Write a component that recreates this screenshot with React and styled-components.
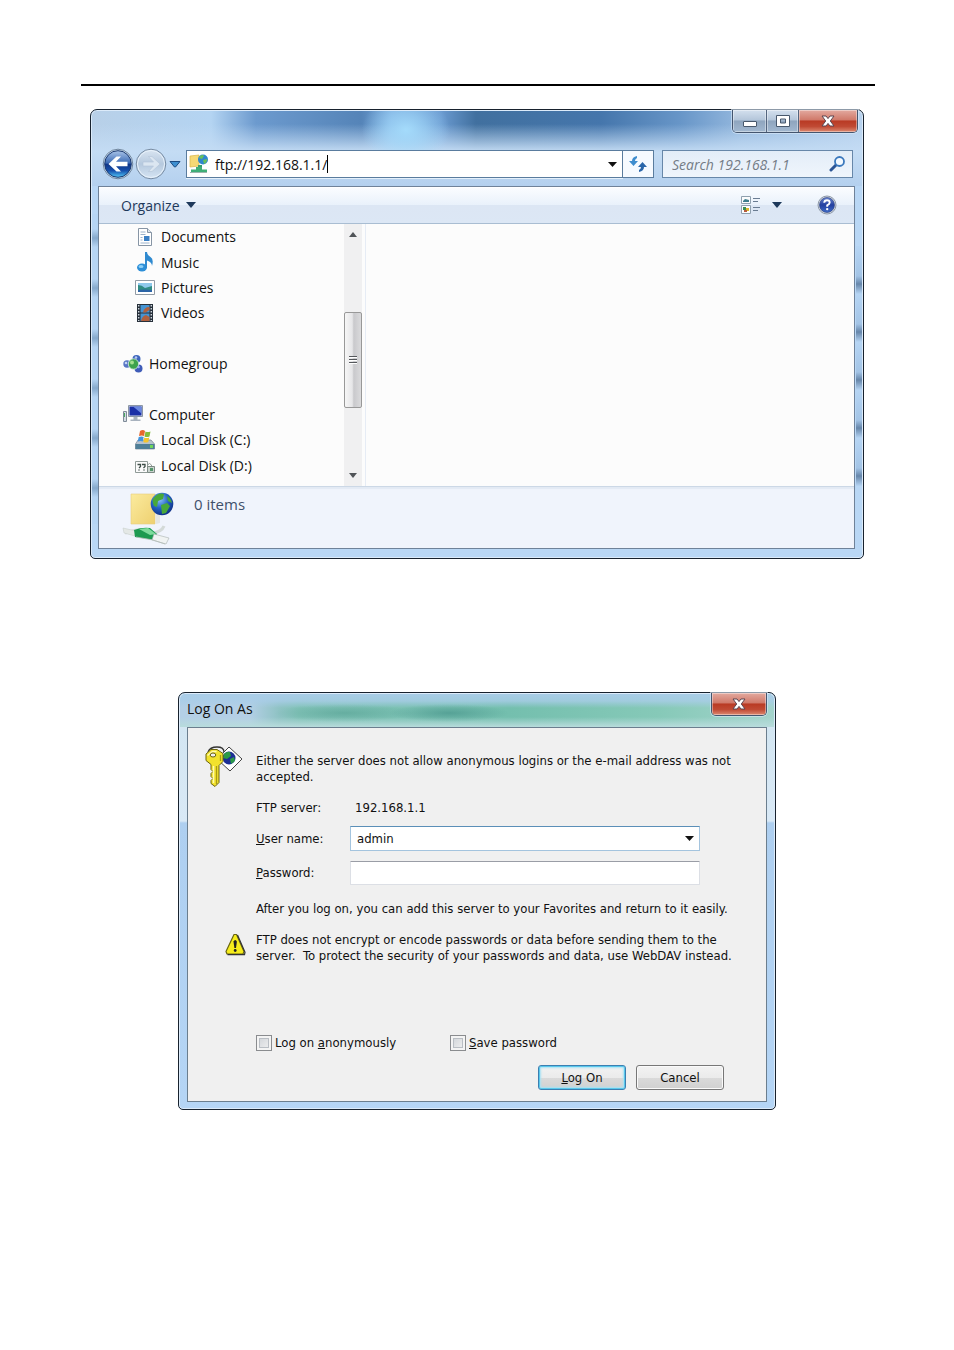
import React from "react";
import styled, { createGlobalStyle, css } from "styled-components";

const Global = createGlobalStyle`
  *, *::before, *::after { box-sizing: border-box; }
  body { margin: 0; background: #fff; }
  button, input, select { font: inherit; color: inherit; margin: 0; padding: 0; border: 0; background: none; outline: none; }
  svg { display: block; flex: none; }
`;

const segoe = css`font-family: "Open Sans", "Noto Sans", sans-serif;`;
const tahoma = css`font-family: "DejaVu Sans Condensed", "DejaVu Sans", sans-serif;`;

const Page = styled.main`
  padding: 84px 79px 240px 81px;
`;
const Rule = styled.hr`
  margin: 0;
  border: 0;
  border-top: 2px solid #000;
`;

/* ---------- Explorer window ---------- */
const Explorer = styled.section`
  ${segoe}
  margin: 23px 11px 0 9px;
  padding: 0 8px 9px 7px;
  border: 1px solid #18222e;
  border-radius: 7px 7px 5px 5px;
  box-shadow: inset 0 0 0 1px #dcebfa;
  font-size: 14px;
  color: #111;
  background:
    radial-gradient(ellipse 44px 36px at 315px 20px, #a4dbfb 0, #a4dbfb99 45%, #a4dbfb00 100%) no-repeat,
    linear-gradient(to bottom, #c4dcf400 14px, #c4dcf4 42px, #b4d0ee 76px) no-repeat 0 0 / 100% 76px,
    linear-gradient(to right, #b8d0e8 0, #b4d4f2 120px, #6c9ace 165px, #5584b8 270px, #78a8dc 300px, #6a9ad0 350px, #41709f 385px, #4576ac 510px, #6896c8 590px, #94b8de 650px, #b8d2ee 100%) no-repeat 0 0 / 100% 76px,
    repeating-linear-gradient(to bottom, #b6d5f4 0, #b6d5f4 15px, #86a9cc 24px, #b6d5f4 33px, #b6d5f4 50px) no-repeat 0 104px / 7px 310px,
    repeating-linear-gradient(to bottom, #b6d5f4 0, #a3c4e6 30px, #6686aa 38px, #b6d5f4 48px) no-repeat 100% 136px / 7px 240px,
    #b9d7f5;
`;
const TitleBar = styled.header`
  display: flex;
  justify-content: flex-end;
  height: 40px;
`;
const CaptionGroup = styled.div`
  display: flex;
  height: 23px;
  margin-right: ${(p) => (p.$overhang ? "-3px" : "0")};
  border: 1px solid #44556e;
  border-top: 0;
  border-radius: 0 0 5px 5px;
  overflow: hidden;
  box-shadow: 0 0 0 1px #dcebfa99;
`;
const CaptionButton = styled.button`
  display: grid;
  place-items: center;
  width: ${(p) => p.$width}px;
  height: 22px;
  border-right: ${(p) => (p.$close ? "0" : "1px solid #54657e")};
  box-shadow: inset 0 0 0 1px #ffffff66;
  background: ${(p) =>
    p.$close
      ? "linear-gradient(#e3aaa0 0, #d0796a 45%, #b93a24 50%, #c04a34 75%, #dc8a72 100%)"
      : "linear-gradient(#d4e0ee 0, #b4c6da 45%, #8fa5be 50%, #a2b8d0 100%)"};
`;
const NavBar = styled.nav`
  display: flex;
  align-items: center;
  height: 28px;
  padding: 0 2px 0 4px;
`;
const RoundButtons = styled.div`
  display: flex;
  align-items: center;
  width: 84px;
`;
const RoundButton = styled.button`
  width: 33px;
  height: 32px;
`;
const ArrowButton = styled.button`
  display: grid;
  place-items: center;
  width: ${(p) => p.$width || 14}px;
  height: 24px;
`;
const AddressBox = styled.div`
  display: flex;
  align-items: center;
  flex: 1;
  height: 28px;
  padding-left: 2px;
  border: 1px solid #5a7c9e;
  background: #fff;
  box-shadow: 0 1px 0 #e4f0fb;
`;
const AddressInput = styled.input`
  field-sizing: content;
  height: 22px;
  margin-left: 6px;
`;
const Caret = styled.span`
  width: 1px;
  height: 18px;
  margin-right: auto;
  background: #000;
`;
const RefreshButton = styled.button`
  display: grid;
  place-items: center;
  width: 31px;
  height: 28px;
  margin-right: 8px;
  border: 1px solid #5a7c9e;
  border-left: 0;
  background: #f6faff;
`;
const SearchBox = styled.label`
  display: flex;
  align-items: center;
  width: 191px;
  height: 28px;
  padding: 0 6px 0 9px;
  border: 1px solid #6787a9;
  background: linear-gradient(#e3edf8, #eff5fc);
`;
const SearchInput = styled.input`
  flex: 1;
  min-width: 0;
  height: 22px;
  font-style: italic;
  &::placeholder { color: #747c86; opacity: 1; }
`;
const Client = styled.div`
  margin-top: 8px;
  border: 1px solid #6f8299;
  background: #fcfcfc;
`;
const Toolbar = styled.div`
  display: flex;
  align-items: center;
  height: 37px;
  padding: 0 17px 0 22px;
  border-bottom: 1px solid #a9bdd2;
  box-shadow: inset 0 1px 0 #fff;
  background: linear-gradient(#fbfdff 0, #e9f1fb 50%, #dce6f4 51%, #dce7f5 100%);
  color: #1e395b;
`;
const OrganizeButton = styled.button`
  display: flex;
  align-items: center;
  gap: 6px;
  margin-right: auto;
`;
const IconButton = styled.button`
  display: block;
  margin-left: ${(p) => p.$gap || 0}px;
`;
const Panes = styled.div`
  display: flex;
  height: 262px;
`;
const Tree = styled.ul`
  display: grid;
  grid-template-rows: repeat(10, 1fr);
  flex: 1;
  margin: 0;
  padding: 0 0 8px;
  list-style: none;
`;
const TreeItem = styled.li`
  display: flex;
  align-items: center;
  grid-row: ${(p) => p.$row};
  padding-left: ${(p) => (p.$root ? 24 : 36)}px;
`;
const TreeLink = styled.a`
  display: flex;
  align-items: center;
  gap: 6px;
  color: #111;
  text-decoration: none;
`;
const Sidebar = styled.div`
  display: flex;
  width: 267px;
  border-right: 1px solid #e6ecf5;
`;
const ScrollTrack = styled.div`
  display: flex;
  flex-direction: column;
  align-items: center;
  width: 18px;
  margin-right: 3px;
  padding: 8px 0;
  background: #f0f0f1;
`;
const ScrollThumb = styled.div`
  display: grid;
  place-items: center;
  width: 18px;
  height: 96px;
  margin: 75px 0 auto;
  border: 1px solid #989898;
  border-radius: 2px;
  background: linear-gradient(to right, #f6f6f6 0, #e6e6e8 45%, #c9c9cc 55%, #dadadc 100%);
`;
const FilePane = styled.div`
  flex: 1;
`;
const Details = styled.footer`
  display: flex;
  height: 62px;
  padding: 4px 0 0 23px;
  gap: 20px;
  border-top: 1px solid #ccd8e6;
  box-shadow: inset 0 2px 1px #e3eaf4;
  background: #f0f4fc;
  font-size: 15px;
  line-height: 26px;
  color: #40506a;
`;

/* ---------- Log On dialog ---------- */
const Dialog = styled.section`
  ${tahoma}
  margin: 133px 99px 0 97px;
  padding: 0 8px 7px;
  border: 1px solid #18222e;
  border-radius: 7px 7px 5px 5px;
  box-shadow: inset 0 0 0 1px #dcebfa;
  font-size: 13px;
  line-height: 16px;
  color: #111;
  background:
    radial-gradient(ellipse 70px 9px at 165px 20px, #3f8f8066, #3f8f8000) no-repeat,
    radial-gradient(ellipse 60px 9px at 270px 20px, #2f7f7877, #2f7f7800) no-repeat,
    linear-gradient(to bottom, #a9cde8 0, #a9cde8cc 8px, #a9cde800 15px, #a9cde800 24px, #b8dcdc 34px) no-repeat 0 0 / 100% 34px,
    linear-gradient(to right, #b4cfe6 0, #b4cfe6 70px, #8fc3c4 100px, #82c3b8 120px, #74bfae 330px, #86c9b8 480px, #a4d4cc 100%) no-repeat 0 0 / 100% 34px,
    linear-gradient(to bottom, #d3e6f2 0, #d9e9f6 94px, #aecff0 96px, #b6d6f6 100%) no-repeat 0 34px / 100% 100%,
    #b9d9f8;
`;
const DialogTitle = styled.header`
  ${segoe}
  display: flex;
  justify-content: space-between;
  height: 34px;
  font-size: 14px;
  line-height: 32px;
`;
const DialogHeading = styled.h1`
  margin: 0;
  font-size: inherit;
  font-weight: 400;
`;
const DialogBody = styled.form`
  padding: 18px 28px 11px 17px;
  border: 1px solid #6b7e8e;
  background: #f0f0f0;
`;
const Message = styled.div`
  display: grid;
  grid-template-columns: 51px 1fr;
`;
const MessageText = styled.p`
  margin: 0;
  padding-top: ${(p) => p.$top || 0}px;
  white-space: pre-line;
`;
const WarningSlot = styled.div`
  padding: 1px 0 0 20px;
`;
const Fields = styled.div`
  display: grid;
  grid-template-columns: 94px minmax(0, 350px);
  align-items: center;
  row-gap: 10px;
  margin: 11px 0 16px 51px;
`;
const Output = styled.output`
  padding-left: 5px;
`;
const SelectWrap = styled.div`
  display: grid;
  align-items: center;
  & > * { grid-area: 1 / 1; }
  & > svg { justify-self: end; margin-right: 6px; pointer-events: none; }
`;
const UserSelect = styled.select`
  appearance: none;
  width: 100%;
  height: 25px;
  padding: 0 6px;
  border: 1px solid #a4c4de;
  border-top-color: #5b8fb8;
  background: #fff;
`;
const PasswordInput = styled.input`
  width: 100%;
  height: 24px;
  padding: 0 6px;
  border: 1px solid #dcdfe5;
  border-top-color: #9a9da6;
  border-radius: 1px;
  background: #fff;
`;
const Note = styled.p`
  margin: 0 0 15px 51px;
`;
const Options = styled.div`
  display: grid;
  grid-template-columns: 194px 1fr;
  margin: 71px 0 14px 51px;
`;
const Option = styled.label`
  display: flex;
  align-items: center;
  gap: 3px;
`;
const Tick = styled.input`
  appearance: none;
  width: 16px;
  height: 16px;
  border: 1px solid #8a8c8f;
  box-shadow: inset 0 0 0 2px #f4f4f4, inset 0 0 0 3px #b9bec4;
  background: linear-gradient(135deg, #ccd0d5, #f4f4f4);
`;
const Actions = styled.div`
  display: flex;
  justify-content: flex-end;
  gap: 10px;
  padding-right: 14px;
`;
const PushButton = styled.button`
  width: 88px;
  height: 25px;
  border: 1px solid ${(p) => (p.$primary ? "#3c7fb1" : "#777")};
  border-radius: 3px;
  box-shadow: ${(p) => (p.$primary ? "inset 0 0 0 1px #58c8ec, inset 0 0 2px 2px #a8e2f4" : "inset 0 0 0 1px #fafafa")};
  background: linear-gradient(#f2f2f2 0, #ebebeb 50%, #dadada 52%, #d0d0d0 100%);
`;

/* ---------- Drawings ---------- */
const Down = ({ color = "#111", w = 9, h = 5, up }) => (
  <svg width={w} height={h} viewBox="0 0 10 6" preserveAspectRatio="none" aria-hidden="true">
    <path d={up ? "M0 6h10L5 0z" : "M0 0h10L5 6z"} fill={color} />
  </svg>
);
const CrossIcon = () => (
  <svg width="14" height="12" viewBox="0 0 14 12" aria-hidden="true">
    <path d="M1 1h4l2 2.6L9 1h4L9.300 6 13 11H9L7 8.400 5 11H1l3.700-5z" fill="#fff" stroke="#5b4550" strokeWidth="1" />
  </svg>
);
const MinIcon = () => (
  <svg width="16" height="14" viewBox="0 0 16 14" aria-hidden="true">
    <rect x="1.500" y="7.500" width="13" height="5" rx=".5" fill="#fff" stroke="#48586c" />
  </svg>
);
const MaxIcon = () => (
  <svg width="14" height="12" viewBox="0 0 14 12" aria-hidden="true">
    <path d="M.5.5h13v11H.5zM4.500 4v4h5V4z" fill="#fff" fillRule="evenodd" stroke="#48586c" />
  </svg>
);
const BackIcon = () => (
  <svg width="33" height="32" viewBox="0 0 33 32" aria-hidden="true">
    <defs>
      <linearGradient id="back" x2="0" y2="1">
        <stop offset="0" stopColor="#a9c4e8" />
        <stop offset=".47" stopColor="#3a69b4" />
        <stop offset=".5" stopColor="#0f3487" />
        <stop offset=".75" stopColor="#1650ac" />
        <stop offset="1" stopColor="#52c8f8" />
      </linearGradient>
    </defs>
    <circle cx="16" cy="16" r="14.800" fill="#c9dcef" stroke="#70869e" />
    <circle cx="16" cy="16" r="13.300" fill="url(#back)" stroke="#1d3a70" />
    <path d="M6.500 16l8-7.500H19L14 13.800h11.500v4.400H14l5 5.300h-4.500z" fill="#fff" />
  </svg>
);
const ForwardIcon = () => (
  <svg width="33" height="32" viewBox="0 0 33 32" aria-hidden="true">
    <defs>
      <linearGradient id="fwd" x2="0" y2="1">
        <stop offset="0" stopColor="#dbe6f2" />
        <stop offset=".5" stopColor="#b6c9de" />
        <stop offset="1" stopColor="#d6e5f4" />
      </linearGradient>
    </defs>
    <circle cx="16" cy="16" r="14.800" fill="url(#fwd)" stroke="#768ba3" />
    <circle cx="16" cy="16" r="13.500" fill="none" stroke="#e8f2fb" />
    <path d="M25 16l-8-7.500h-3.500l5 5.500H8v4h10.500l-5 5.500H17z" fill="#dbe6f1" stroke="#b4c5d8" strokeWidth=".6" />
  </svg>
);
const RecentIcon = () => (
  <svg width="12" height="8" viewBox="0 0 12 8" aria-hidden="true">
    <path d="M1 1.500h10L6.500 7h-1z" fill="#3d8fd0" stroke="#1c4a80" strokeLinejoin="round" />
  </svg>
);
const SiteIcon = () => (
  <svg width="20" height="20" viewBox="0 0 20 20" aria-hidden="true">
    <path d="M1 2l9-1v11l-9 1z" fill="#f5d975" stroke="#d9b548" strokeWidth=".7" />
    <circle cx="14" cy="5.500" r="5" fill="#2f86cf" />
    <path d="M11 2q3-2 4 0l-2 3-3-1zM14 6l4-1q0 4-3 5z" fill="#68c05a" />
    <path d="M9 11h4v4H9z" fill="#38a06e" />
    <path d="M7 13h6v2.500h5v2.500H2v-2.500h5z" fill="#3fae77" />
    <path d="M1 18.500h17" stroke="#9cb5ae" />
  </svg>
);
const RefreshIcon = () => (
  <svg width="18" height="18" viewBox="0 0 18 18" aria-hidden="true">
    <path d="M8 1Q3 2 3 6H0l4.500 5L9 6H6q0-2 2-3z" fill="#3f8dce" />
    <path d="M10 17q5-1 5-5h3l-4.500-5L9 12h3q0 2-2 3z" fill="#2a66aa" />
  </svg>
);
const LensIcon = () => (
  <svg width="17" height="16" viewBox="0 0 17 16" aria-hidden="true">
    <path d="M2 14l5-5" stroke="#2b5596" strokeWidth="3" strokeLinecap="round" />
    <circle cx="10.500" cy="5.500" r="4.500" fill="#f3f9ff" stroke="#3a78bd" strokeWidth="1.800" />
  </svg>
);
const ViewIcon = () => (
  <svg width="20" height="18" viewBox="0 0 20 18" aria-hidden="true">
    <path d="M.5.5h9v7h-9zM.5 9.500h9v8h-9z" fill="#fbfcfd" stroke="#8fa0ae" />
    <path d="M2 5l2-2 4 1v2H2z" fill="#3c7c8c" />
    <path d="M2 11h3v3H2z" fill="#3a8d52" />
    <path d="M5 12h3v3H5z" fill="#d9b62c" />
    <path d="M3 14h3v2H3z" fill="#b45a3c" />
    <path d="M12 2.500h7M12 5.500h5M12 11.500h7M12 14.500h5" stroke="#6a7c92" />
  </svg>
);
const HelpIcon = () => (
  <svg width="20" height="20" viewBox="0 0 20 20" aria-hidden="true">
    <defs>
      <linearGradient id="help" x2="0" y2="1">
        <stop offset="0" stopColor="#6a84cc" />
        <stop offset=".5" stopColor="#2340a0" />
        <stop offset="1" stopColor="#3f6cc8" />
      </linearGradient>
    </defs>
    <circle cx="10" cy="10" r="9" fill="#d4dae2" stroke="#8d98a8" />
    <circle cx="10" cy="10" r="7.500" fill="url(#help)" stroke="#273c7c" strokeWidth=".6" />
    <path d="M7.200 7.800Q7.400 5.200 10 5.200t2.700 2.300Q12.700 9 10.200 10.400v1.400" fill="none" stroke="#fff" strokeWidth="1.900" />
    <circle cx="10.200" cy="14.100" r="1.200" fill="#fff" />
  </svg>
);
const DocumentIcon = () => (
  <svg width="20" height="20" viewBox="0 0 20 20" aria-hidden="true">
    <path d="M3.500 1.500h9l4 4v13h-13z" fill="#fff" stroke="#8795a5" />
    <path d="M12.500 1.500v4h4" fill="#dde5ee" stroke="#8795a5" />
    <path d="M5.500 5h5M5.500 7.500h5M5.500 10.500h2M5.500 13h2M5.500 16h9" stroke="#9cb3cc" />
    <path d="M9 9h5.500v5H9z" fill="#3a7fc4" />
  </svg>
);
const MusicIcon = () => (
  <svg width="20" height="20" viewBox="0 0 20 20" aria-hidden="true">
    <ellipse cx="7" cy="15.500" rx="5" ry="4" fill="#2d8fd8" />
    <ellipse cx="6" cy="14.500" rx="2.500" ry="1.500" fill="#8ed0f6" />
    <path d="M10 16V0h2q0 3 3.500 5t1.500 9q0-4-5-5.500V16z" fill="#2f8ad0" />
  </svg>
);
const PictureIcon = () => (
  <svg width="20" height="20" viewBox="0 0 20 20" aria-hidden="true">
    <path d="M.5 3.500h19v14H.5z" fill="#fff" stroke="#929ca6" />
    <path d="M3 6h14v9H3z" fill="#8fc9ec" />
    <path d="M3 8q4 0 7 3l7-2v6H3z" fill="#2f8c84" />
    <path d="M3 13q6-1 14 0v2H3z" fill="#2b64a6" />
  </svg>
);
const VideoIcon = () => (
  <svg width="20" height="20" viewBox="0 0 20 20" aria-hidden="true">
    <path d="M2 1h16v18H2z" fill="#27303a" />
    <path d="M5.500 2h9v7.500h-9zM5.500 10.500h9V18h-9z" fill="#4694d2" />
    <path d="M8 9.500Q9 4 14.500 4v3l-4 2.500zM6 18q1-5 5-6l3.500 2v4z" fill="#b0603e" />
    <path d="M3.700 2v16M16.300 2v16" stroke="#cfd8df" strokeWidth="1.400" strokeDasharray="1.500 1.500" />
  </svg>
);
const HomegroupIcon = () => (
  <svg width="20" height="20" viewBox="0 0 20 20" aria-hidden="true">
    <circle cx="4" cy="10" r="3.700" fill="#5876c4" />
    <circle cx="13.500" cy="5" r="4" fill="#3f66bc" />
    <circle cx="15.500" cy="14.500" r="4" fill="#3f5cb8" />
    <circle cx="10.500" cy="10" r="5.200" fill="#3ea34c" stroke="#dcefe4" strokeWidth=".8" />
    <circle cx="9" cy="8.500" r="2" fill="#a4e08e" />
    <circle cx="3" cy="9" r="1.300" fill="#c4d4f4" />
    <circle cx="13" cy="3.500" r="1.300" fill="#b4c9f2" />
    <circle cx="15.500" cy="13" r="1.300" fill="#9cb4ee" />
  </svg>
);
const ComputerIcon = () => (
  <svg width="20" height="20" viewBox="0 0 20 20" aria-hidden="true">
    <path d="M.5 7.500h3v10h-3z" fill="#d4dbe2" stroke="#7f8b98" />
    <path d="M1.500 9v4" stroke="#4aa860" />
    <path d="M5.500 1.500h14v11h-14z" fill="#d6dce4" stroke="#8c97a5" />
    <path d="M6.500 2.500h12v9h-12z" fill="#1a2fa6" />
    <path d="M10 2.500h8.500v7z" fill="#6a88e0" />
    <path d="M10.500 13h4v2.500h3v1.500h-10v-1.500h3z" fill="#a8b2be" />
  </svg>
);
const SystemDiskIcon = () => (
  <svg width="20" height="20" viewBox="0 0 20 20" aria-hidden="true">
    <path d="M3 10h13l3.500 4v5H.5v-5z" fill="#b8c3ce" stroke="#74828f" strokeWidth=".7" />
    <path d="M.5 14h19v5H.5z" fill="#4f7f98" />
    <path d="M15 15h3v3h-3z" fill="#6fd65a" />
    <path d="M5 1q3-2 5 0l-1 5q-2-1-5 0z" fill="#e8682c" />
    <path d="M10.500 1.500q2 1 5 0l-1 5q-3 1-5 0z" fill="#83bd3c" />
    <path d="M3.700 7q3-1 5 0l-1 4.500q-2-1-5 0z" fill="#4594dc" />
    <path d="M9.300 7.500q2 1 5 0l-1 4.500q-3 1-5 0z" fill="#f3c52e" />
  </svg>
);
const UnknownDiskIcon = () => (
  <svg width="20" height="20" viewBox="0 0 20 20" aria-hidden="true">
    <path d="M.5 6.500h12v11H.5z" fill="#fbfbfb" stroke="#8f9a96" />
    <path d="M2.500 9.500h3v2L4 13m3-3.500h3v2L8.500 13M3.500 15h1m4 0h1" fill="none" stroke="#3c4c46" strokeWidth="1.300" />
    <path d="M12.500 12v-2q2-3 4 0v2" fill="none" stroke="#8f9a96" />
    <path d="M12.500 11.500h7v6h-7z" fill="#c9d3cd" stroke="#7d8a84" />
    <path d="M15 13h3v3h-3z" fill="#54946a" />
  </svg>
);
const NetworkFolderIcon = () => (
  <svg width="52" height="54" viewBox="0 0 52 54" aria-hidden="true">
    <defs>
      <linearGradient id="folder" x2="1" y2="1">
        <stop offset="0" stopColor="#fbeb9e" />
        <stop offset="1" stopColor="#eed070" />
      </linearGradient>
      <radialGradient id="globe" cx=".4" cy=".3" r=".75">
        <stop offset="0" stopColor="#8fc4f8" />
        <stop offset=".5" stopColor="#2464c4" />
        <stop offset="1" stopColor="#0c2a80" />
      </radialGradient>
    </defs>
    <path d="M9 3l24 0v30H9z" fill="url(#folder)" stroke="#e8cf7c" strokeWidth=".6" />
    <path d="M34 22v11l4-1v-8z" fill="#e4e6e4" />
    <circle cx="40" cy="13" r="11.300" fill="url(#globe)" />
    <path d="M31 8q5-7 11-5l-1 5-5 2-1 6-3-1q-2-4-1-7zM39 14l6-2 3 3-4 7-4 1zM45 5q4 2 5 7l-4-2z" fill="#48a838" />
    <path d="M3 42q14-5 24-3M28 43q12-2 14-8" fill="none" stroke="#d4dad8" strokeWidth="3" />
    <path d="M1 37l13 3-1 5-11-3z" fill="#e4e8e6" stroke="#c3cac6" strokeWidth=".5" />
    <path d="M12 39q8-3 16-2l7 6-3 6-19-3z" fill="#1d9a50" />
    <path d="M17 38l9-1 8 6-6 1z" fill="#7edb9c" />
    <path d="M32 43l15 4-3 6-14-4z" fill="#f0f3f2" stroke="#a9b2ae" strokeWidth=".6" />
    <path d="M14 46l17 3 12 4" fill="none" stroke="#b4bcb8" strokeWidth=".8" />
  </svg>
);
const KeyIcon = () => (
  <svg width="38" height="43" viewBox="0 0 38 43" aria-hidden="true">
    <path d="M24 1l13 12-12 12-13-12z" fill="#fff" stroke="#444" />
    <circle cx="24" cy="12" r="6.500" fill="#1c2f96" />
    <path d="M19 8q3-3 6-2l1 4-4 3-4-1zM25 13l4-2 1 4-4 3z" fill="#2c9a48" />
    <path d="M3 6q2-5 9-5t7 5" fill="none" stroke="#333" strokeWidth="1.300" />
    <path d="M6 3.500h6l6 4v8l-4 4v17l-4 4-4-3v-3l2-2-2-2v-3l2-2-2-2v-5l-5-4V8z" fill="#f2e22c" stroke="#6b6410" />
    <path d="M2.500 9.500l5-4h4M8.500 20v17" fill="none" stroke="#fffbb0" strokeWidth="1.500" />
    <path d="M11.500 20v18M15.500 9v6" stroke="#a89a14" strokeWidth="1.300" />
    <ellipse cx="8" cy="9" rx="2.800" ry="2" fill="#f0f0f0" stroke="#6b6410" />
  </svg>
);
const WarningIcon = () => (
  <svg width="21" height="23" viewBox="0 0 21 23" aria-hidden="true">
    <path d="M9 1.500h2.500l7.500 17-1 2.500H2l-1-2.500z" fill="#f6ec1c" stroke="#6a6610" strokeWidth="1.200" strokeLinejoin="round" />
    <path d="M2.500 21.700h17l.5-2.500L12.500 2" fill="none" stroke="#333" strokeWidth="1.200" />
    <path d="M8.500 8.500q1.700-3 3.400 0L11 15H9.400z" fill="#222" />
    <circle cx="10.200" cy="17.500" r="1.400" fill="#222" />
  </svg>
);
const GripIcon = () => (
  <svg width="9" height="10" viewBox="0 0 9 10" aria-hidden="true">
    <path d="M0 1.500h8M0 4.500h8M0 7.500h8" stroke="#55585c" />
    <path d="M0 2.500h8M0 5.500h8M0 8.500h8" stroke="#fff" />
  </svg>
);

const places = [
  { row: 1, label: "Documents", Icon: DocumentIcon },
  { row: 2, label: "Music", Icon: MusicIcon },
  { row: 3, label: "Pictures", Icon: PictureIcon },
  { row: 4, label: "Videos", Icon: VideoIcon },
  { row: 6, label: "Homegroup", Icon: HomegroupIcon, root: true },
  { row: 8, label: "Computer", Icon: ComputerIcon, root: true },
  { row: 9, label: "Local Disk (C:)", Icon: SystemDiskIcon },
  { row: 10, label: "Local Disk (D:)", Icon: UnknownDiskIcon },
];

function ExplorerWindow() {
  return (
    <Explorer>
      <TitleBar>
        <CaptionGroup $overhang>
          <CaptionButton $width={34} aria-label="Minimize"><MinIcon /></CaptionButton>
          <CaptionButton $width={32} aria-label="Maximize"><MaxIcon /></CaptionButton>
          <CaptionButton $width={58} $close aria-label="Close"><CrossIcon /></CaptionButton>
        </CaptionGroup>
      </TitleBar>
      <NavBar>
        <RoundButtons>
          <RoundButton aria-label="Back"><BackIcon /></RoundButton>
          <RoundButton aria-label="Forward"><ForwardIcon /></RoundButton>
          <ArrowButton aria-label="Recent pages"><RecentIcon /></ArrowButton>
        </RoundButtons>
        <AddressBox>
          <SiteIcon />
          <AddressInput aria-label="Address" defaultValue="ftp://192.168.1.1/" />
          <Caret />
          <ArrowButton $width={20} aria-label="Previous locations"><Down /></ArrowButton>
        </AddressBox>
        <RefreshButton aria-label="Refresh"><RefreshIcon /></RefreshButton>
        <SearchBox>
          <SearchInput aria-label="Search" placeholder="Search 192.168.1.1" />
          <LensIcon />
        </SearchBox>
      </NavBar>
      <Client>
        <Toolbar>
          <OrganizeButton>Organize <Down color="#1e395b" w={10} h={6} /></OrganizeButton>
          <IconButton aria-label="Change view"><ViewIcon /></IconButton>
          <IconButton $gap={11} aria-label="More views"><Down color="#1e395b" w={10} h={6} /></IconButton>
          <IconButton $gap={35} aria-label="Help"><HelpIcon /></IconButton>
        </Toolbar>
        <Panes>
          <Sidebar>
            <Tree>
              {places.map(({ row, label, Icon, root }) => (
                <TreeItem key={label} $row={row} $root={root}>
                  <TreeLink href="#"><Icon />{label}</TreeLink>
                </TreeItem>
              ))}
            </Tree>
            <ScrollTrack>
              <Down up color="#505458" w={8} h={5} />
              <ScrollThumb><GripIcon /></ScrollThumb>
              <Down color="#505458" w={8} h={5} />
            </ScrollTrack>
          </Sidebar>
          <FilePane />
        </Panes>
        <Details><NetworkFolderIcon />0 items</Details>
      </Client>
    </Explorer>
  );
}

function LogOnDialog() {
  return (
    <Dialog>
      <DialogTitle>
        <DialogHeading>Log On As</DialogHeading>
        <CaptionGroup>
          <CaptionButton type="button" $width={54} $close aria-label="Close"><CrossIcon /></CaptionButton>
        </CaptionGroup>
      </DialogTitle>
      <DialogBody onSubmit={(e) => e.preventDefault()}>
        <Message>
          <KeyIcon />
          <MessageText $top={7}>{"Either the server does not allow anonymous logins or the e-mail address was not\naccepted."}</MessageText>
        </Message>
        <Fields>
          <span>FTP server:</span>
          <Output>192.168.1.1</Output>
          <label htmlFor="user"><u>U</u>ser name:</label>
          <SelectWrap>
            <UserSelect id="user" defaultValue="admin"><option>admin</option></UserSelect>
            <Down />
          </SelectWrap>
          <label htmlFor="password"><u>P</u>assword:</label>
          <PasswordInput id="password" type="password" />
        </Fields>
        <Note>After you log on, you can add this server to your Favorites and return to it easily.</Note>
        <Message>
          <WarningSlot><WarningIcon /></WarningSlot>
          <MessageText>{"FTP does not encrypt or encode passwords or data before sending them to the\nserver.\u00a0 To protect the security of your passwords and data, use WebDAV instead."}</MessageText>
        </Message>
        <Options>
          <Option><Tick type="checkbox" /><span>Log on <u>a</u>nonymously</span></Option>
          <Option><Tick type="checkbox" /><span><u>S</u>ave password</span></Option>
        </Options>
        <Actions>
          <PushButton $primary type="submit"><u>L</u>og On</PushButton>
          <PushButton type="button">Cancel</PushButton>
        </Actions>
      </DialogBody>
    </Dialog>
  );
}

export default function App() {
  return (
    <>
      <Global />
      <Page>
        <Rule />
        <ExplorerWindow />
        <LogOnDialog />
      </Page>
    </>
  );
}
